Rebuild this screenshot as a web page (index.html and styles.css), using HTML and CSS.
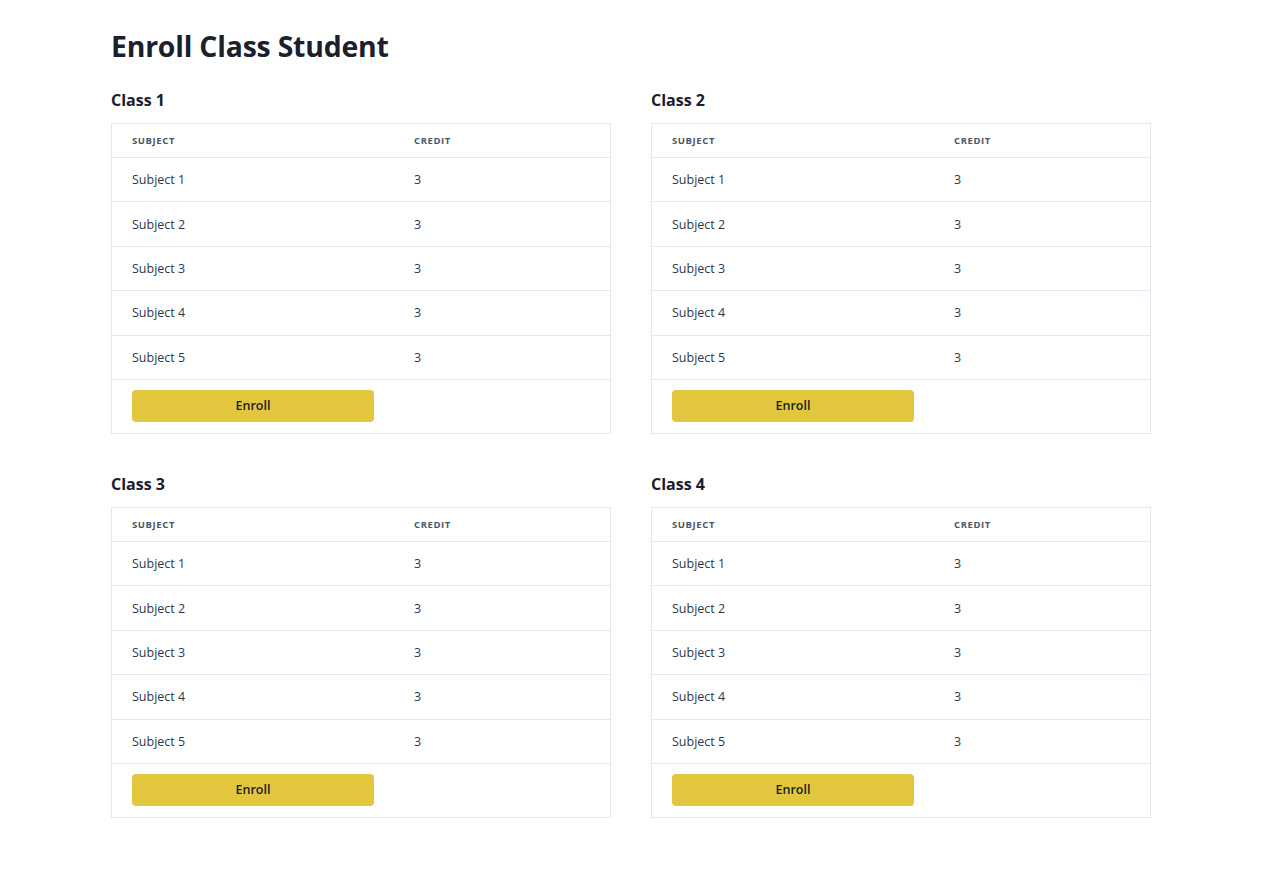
FILE: index.html
```html
<!DOCTYPE html>
<html>
<head>
<meta charset="utf-8">
<link rel="stylesheet" href="styles.css">
</head>
<body>
<main class="page">
  <h1 class="title">Enroll Class Student</h1>
  <div class="grid">
    <section class="klass">
      <h2 class="klass-name">Class 1</h2>
      <div class="card">
        <div class="row head"><span class="c1">Subject</span><span class="c2">Credit</span></div>
        <div class="row"><span class="c1">Subject 1</span><span class="c2">3</span></div>
        <div class="row"><span class="c1">Subject 2</span><span class="c2">3</span></div>
        <div class="row"><span class="c1">Subject 3</span><span class="c2">3</span></div>
        <div class="row"><span class="c1">Subject 4</span><span class="c2">3</span></div>
        <div class="row"><span class="c1">Subject 5</span><span class="c2">3</span></div>
        <div class="foot"><button class="btn">Enroll</button></div>
      </div>
    </section>
    <section class="klass">
      <h2 class="klass-name">Class 2</h2>
      <div class="card">
        <div class="row head"><span class="c1">Subject</span><span class="c2">Credit</span></div>
        <div class="row"><span class="c1">Subject 1</span><span class="c2">3</span></div>
        <div class="row"><span class="c1">Subject 2</span><span class="c2">3</span></div>
        <div class="row"><span class="c1">Subject 3</span><span class="c2">3</span></div>
        <div class="row"><span class="c1">Subject 4</span><span class="c2">3</span></div>
        <div class="row"><span class="c1">Subject 5</span><span class="c2">3</span></div>
        <div class="foot"><button class="btn">Enroll</button></div>
      </div>
    </section>
    <section class="klass">
      <h2 class="klass-name">Class 3</h2>
      <div class="card">
        <div class="row head"><span class="c1">Subject</span><span class="c2">Credit</span></div>
        <div class="row"><span class="c1">Subject 1</span><span class="c2">3</span></div>
        <div class="row"><span class="c1">Subject 2</span><span class="c2">3</span></div>
        <div class="row"><span class="c1">Subject 3</span><span class="c2">3</span></div>
        <div class="row"><span class="c1">Subject 4</span><span class="c2">3</span></div>
        <div class="row"><span class="c1">Subject 5</span><span class="c2">3</span></div>
        <div class="foot"><button class="btn">Enroll</button></div>
      </div>
    </section>
    <section class="klass">
      <h2 class="klass-name">Class 4</h2>
      <div class="card">
        <div class="row head"><span class="c1">Subject</span><span class="c2">Credit</span></div>
        <div class="row"><span class="c1">Subject 1</span><span class="c2">3</span></div>
        <div class="row"><span class="c1">Subject 2</span><span class="c2">3</span></div>
        <div class="row"><span class="c1">Subject 3</span><span class="c2">3</span></div>
        <div class="row"><span class="c1">Subject 4</span><span class="c2">3</span></div>
        <div class="row"><span class="c1">Subject 5</span><span class="c2">3</span></div>
        <div class="foot"><button class="btn">Enroll</button></div>
      </div>
    </section>
  </div>
</main>
</body>
</html>
```
FILE: styles.css
```css
* { box-sizing: border-box; }
html, body { margin: 0; padding: 0; background: #fff; }
body { font-family: "Open Sans", "Noto Sans", sans-serif; color: #111827; }
.page { padding: 26px 0 40px 111px; width: 1151px; }
.title { margin: 0; font-size: 28.4px; font-weight: 700; line-height: 40px; color: #1a202c; letter-spacing: -0.2px; }
.grid { display: grid; grid-template-columns: 500px 500px; column-gap: 40px; row-gap: 40px; margin-top: 24px; }
.klass-name { margin: 0 0 13px 0; font-size: 16px; font-weight: 700; line-height: 20px; color: #1a202c; }
.card { border: 1px solid #e2e8f0; }
.row { display: flex; align-items: center; height: 44.4px; border-bottom: 1px solid #e2e8f0; font-size: 12.5px; color: #2d3748; }
.row.head { height: 34px; font-size: 9.5px; font-weight: 700; text-transform: uppercase; letter-spacing: 0.6px; color: #4a5568; }
.c1 { width: 282px; padding-left: 20px; }
.c2 { padding-left: 20px; }
.foot { padding: 10px 20px 11px 20px; }
.btn { display: block; width: 242px; height: 32px; padding-top: 1px; border: none; border-radius: 4px; background: #e2c73e; font-family: inherit; font-size: 12.5px; font-weight: 600; color: #1a202c; cursor: pointer; }
```
